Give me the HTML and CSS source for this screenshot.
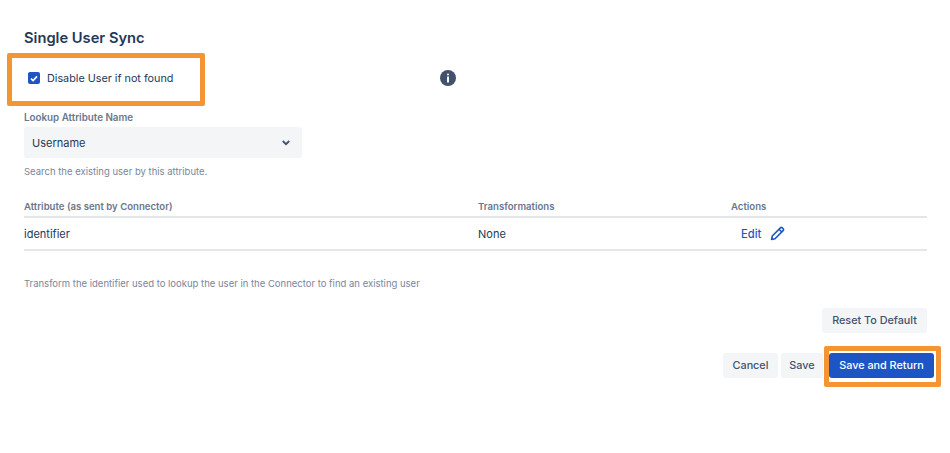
FILE: index.html
```html
<!DOCTYPE html>
<html lang="en">
<head>
    <meta charset="UTF-8">
    <title>Single User Sync</title>
    <link rel="stylesheet" href="styles.css">
</head>
<body>
    <div class="wrap">
        <h2 class="title">Single User Sync</h2>
        <div class="check_row">
            <label class="check_label">
                <span class="check_box">
                    <svg width="8" height="7" viewBox="0 0 8 7"><path d="M1 3.6 L3.1 5.6 L7 1.4" fill="none" stroke="#fff" stroke-width="1.6"/></svg>
                </span>
                Disable User if not found
            </label>
            <span class="info_icon">
                <svg width="16" height="16" viewBox="0 0 16 16"><circle cx="8" cy="8" r="8" fill="#42526e"/><rect x="7" y="3.4" width="2" height="2" rx="1" fill="#fff"/><rect x="7" y="6.6" width="2" height="6" rx=".5" fill="#fff"/></svg>
            </span>
        </div>
        <div class="field_label">Lookup Attribute Name</div>
        <div class="select_box">
            <span>Username</span>
            <svg width="10" height="8" viewBox="0 0 10 8"><path d="M1.8 2 L5 5.2 L8.2 2" fill="none" stroke="#42526e" stroke-width="1.8"/></svg>
        </div>
        <div class="help help_select">Search the existing user by this attribute.</div>
        <div class="table">
            <div class="table_row table_head">
                <div>Attribute (as sent by Connector)</div>
                <div>Transformations</div>
                <div>Actions</div>
            </div>
            <div class="table_row table_body">
                <div>identifier</div>
                <div>None</div>
                <div class="edit_cell">
                    <a class="edit_link">Edit</a>
                    <svg width="15" height="15" viewBox="0 0 15 15"><path d="M1.6 13.4 L2.3 10 L10.4 1.9 Q11.3 1 12.3 1.9 L13.1 2.7 Q14 3.7 13.1 4.6 L5 12.7 Z M9 3.3 L11.7 6" fill="none" stroke="#1d56c4" stroke-width="1.6" stroke-linejoin="round"/></svg>
                </div>
            </div>
        </div>
        <div class="help help_table">Transform the identifier used to lookup the user in the Connector to find an existing user</div>
        <div class="reset_row">
            <button class="btn btn_reset">Reset To Default</button>
        </div>
        <div class="btn_row">
            <button class="btn btn_cancel">Cancel</button>
            <button class="btn btn_save">Save</button>
            <button class="btn btn_primary">Save and Return</button>
        </div>
    </div>
    <div class="mark mark_check"></div>
    <div class="mark mark_save"></div>
</body>
</html>
```
FILE: styles.css
```css
*{
    margin: 0;
    padding: 0;
    box-sizing: border-box;
}
body{
    position: relative;
    height: 453px;
    overflow: hidden;
    background: #fff;
    font-family: Inter, "Liberation Sans", sans-serif;
    color: #253858;
}
.wrap{
    padding: 29px 16px 0 24px;
}
.title{
    height: 19px;
    line-height: 19px;
    font-size: 14.7px;
    font-weight: 600;
    color: #253858;
}
.check_row{
    display: flex;
    align-items: center;
    height: 16px;
    margin-top: 22px;
    margin-left: 4px;
}
.check_label{
    display: flex;
    align-items: center;
    width: 412px;
    font-size: 10.8px;
    color: #253858;
}
.check_box{
    display: flex;
    align-items: center;
    justify-content: center;
    width: 12px;
    height: 12px;
    margin-right: 7px;
    border-radius: 2px;
    background: #1d56c4;
}
.info_icon{
    display: flex;
}
.field_label{
    margin-top: 25px;
    line-height: 14px;
    font-size: 9.8px;
    font-weight: 600;
    color: #6b778c;
}
.select_box{
    display: flex;
    align-items: center;
    justify-content: space-between;
    width: 278px;
    height: 31px;
    margin-top: 2px;
    padding: 0 11px 0 8px;
    border-radius: 3px;
    background: #f4f5f7;
    font-size: 11px;
}
.help{
    line-height: 14px;
    font-size: 9.5px;
    color: #7a869a;
}
.help_select{
    margin-top: 7px;
}
.table{
    margin-top: 19px;
    margin-right: 7px;
}
.table_row{
    display: grid;
    grid-template-columns: 454px 253px 1fr;
    align-items: center;
}
.table_head{
    height: 20px;
    padding-bottom: 1px;
    border-bottom: 2px solid #e4e6ea;
    font-size: 9.6px;
    font-weight: 600;
    color: #6b778c;
}
.table_body{
    height: 33px;
    border-bottom: 2px solid #e4e6ea;
    font-size: 11px;
}
.edit_cell{
    display: flex;
    align-items: center;
    gap: 9px;
    padding-left: 10px;
}
.edit_link{
    font-size: 11.2px;
    color: #1d56c4;
    font-weight: 500;
}
.help_table{
    margin-top: 26px;
}
.reset_row{
    display: flex;
    justify-content: flex-end;
    margin-top: 17px;
    margin-right: 7px;
}
.btn_row{
    display: flex;
    justify-content: flex-end;
    margin-top: 20px;
}
.btn{
    height: 25px;
    border: none;
    border-radius: 3px;
    background: #f4f5f7;
    font-family: inherit;
    font-size: 10.8px;
    font-weight: 500;
    white-space: nowrap;
    color: #42526e;
}
.btn_reset{
    width: 105px;
}
.btn_cancel{
    width: 55px;
    margin-right: 3px;
}
.btn_save{
    width: 42px;
    margin-right: 6px;
}
.btn_primary{
    width: 105px;
    background: #1d56c4;
    color: #fff;
}
.mark{
    position: absolute;
    border: 5px solid #f59433;
    border-radius: 2px;
}
.mark_check{
    left: 7px;
    top: 53px;
    width: 198px;
    height: 53px;
}
.mark_save{
    left: 824px;
    top: 346px;
    width: 117px;
    height: 41px;
}
```
